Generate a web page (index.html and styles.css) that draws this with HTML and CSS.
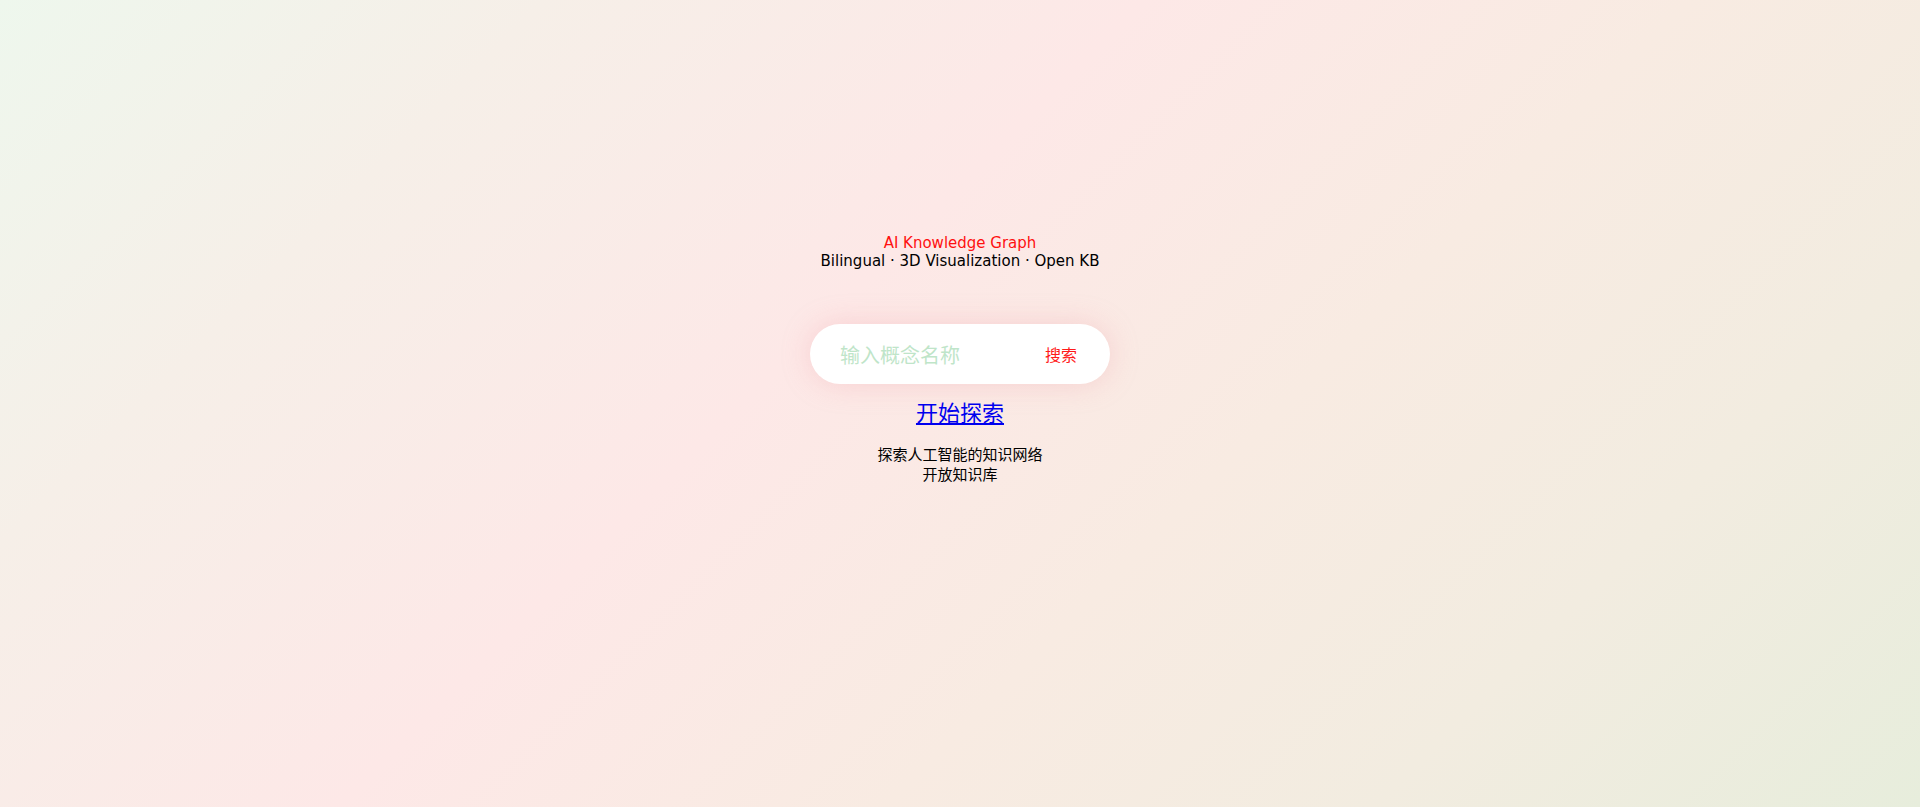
FILE: index.html
```html
<!DOCTYPE html>
<html lang="zh">
<head>
<meta charset="utf-8">
<title>AI Knowledge Graph</title>
<link rel="stylesheet" href="styles.css">
</head>
<body>
<main class="page">
  <header class="hero">
    <div class="hero-title">AI Knowledge Graph</div>
    <div class="hero-sub">Bilingual · 3D Visualization · Open KB</div>
  </header>
  <form class="search">
    <input class="search-input" type="text" placeholder="输入概念名称">
    <button class="search-btn" type="button">搜索</button>
  </form>
  <a class="explore" href="#">开始探索</a>
  <p class="desc">探索人工智能的知识网络开放知识库</p>
</main>
</body>
</html>
```
FILE: styles.css
```css
html, body {
  margin: 0;
  padding: 0;
}
body {
  min-height: 100vh;
  font-family: "DejaVu Sans", "Noto Sans CJK SC", sans-serif;
  font-size: 15px;
  color: #000;
  background: linear-gradient(135deg, #eef7ed 0%, #f6efe8 20%, #fde8e7 42%, #f8ebe2 62%, #f2ece0 80%, #e7eddc 100%);
}
.page {
  min-height: 100vh;
  box-sizing: border-box;
  padding-top: 235px;
  display: flex;
  flex-direction: column;
  align-items: center;
}
.hero {
  text-align: center;
  line-height: 17.5px;
}
.hero-title {
  color: #ff1010;
}
.hero-sub {
  color: #000;
}
.search {
  margin-top: 54px;
  width: 300px;
  height: 60px;
  box-sizing: border-box;
  padding: 0 33px 0 30px;
  background: #fff;
  border-radius: 30px;
  box-shadow: 0 0 28px rgba(240, 160, 168, 0.35);
  display: flex;
  align-items: center;
  justify-content: space-between;
}
.search-input {
  border: none;
  outline: none;
  background: transparent;
  font-family: inherit;
  font-size: 20px;
  width: 170px;
  padding: 0;
  margin-top: 4px;
  color: #333;
}
.search-input::placeholder {
  color: #bfe5c9;
}
.search-btn {
  border: none;
  background: none;
  padding: 0;
  font-family: inherit;
  font-size: 16px;
  color: #ff1a1a;
  cursor: pointer;
}
.explore {
  margin-top: 17px;
  font-size: 22px;
  color: #0000ee;
  text-decoration: underline;
  line-height: 26px;
}
.desc {
  margin: 19px 0 0;
  max-width: 168px;
  text-align: center;
  line-height: 19.5px;
  font-size: 15px;
}
```
